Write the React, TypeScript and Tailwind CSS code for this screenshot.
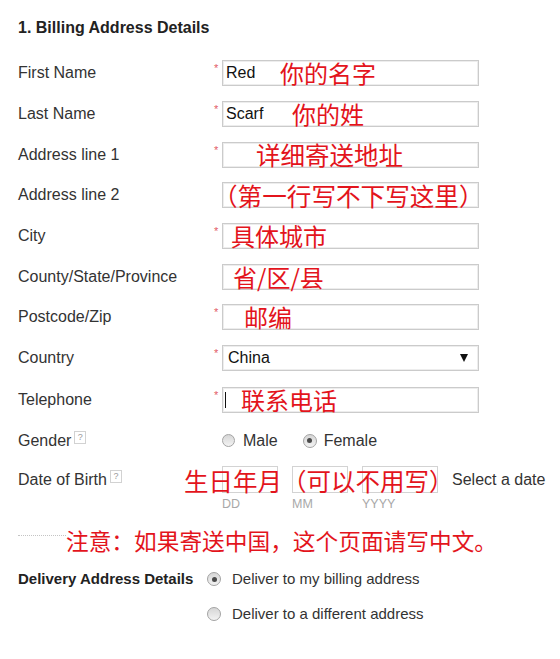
import React from "react";

const RED = "text-[#e3141c]";

type RowDef = {
  label: string;
  h: string;
  req?: boolean;
  value?: string;
  note?: string;
  noteCls?: string;
};

const rows: RowDef[] = [
  { label: "First Name", h: "h-[41px]", req: true, value: "Red", note: "你的名字", noteCls: "left-[58px] text-[24px]" },
  { label: "Last Name", h: "h-[41px]", req: true, value: "Scarf", note: "你的姓", noteCls: "left-[70px] text-[24px]" },
  { label: "Address line 1", h: "h-[41px]", req: true, note: "详细寄送地址", noteCls: "left-[34px] text-[24.5px]" },
  { label: "Address line 2", h: "h-[40px]", note: "（第一行写不下写这里）", noteCls: "left-[-9px] text-[24.6px]" },
  { label: "City", h: "h-[41px]", req: true, note: "具体城市", noteCls: "left-[9px] text-[24px]" },
  { label: "County/State/Province", h: "h-[41px]", note: "省/区/县", noteCls: "left-[11px] text-[24px]" },
  { label: "Postcode/Zip", h: "h-[40px]", req: true, note: "邮编", noteCls: "left-[22px] text-[24px]" },
];

function Star() {
  return (
    <span className="absolute left-[-8px] top-[3px] text-[11px] leading-[11px] text-[#e25a66]">*</span>
  );
}

function Help() {
  return (
    <span className="relative top-[-3px] ml-[3px] inline-flex h-[13px] w-[12px] items-center justify-center border border-[#d2d2d2] bg-white text-[9px] leading-none text-[#9a9a9a]">
      ?
    </span>
  );
}

function Radio({ checked, size }: { checked?: boolean; size: string }) {
  return (
    <span
      className={`inline-flex ${size} items-center justify-center rounded-full border border-[#a3a3a3] bg-gradient-to-b from-[#d6d6d6] to-[#f3f3f3]`}
    >
      {checked && <span className="h-[5px] w-[5px] rounded-full bg-[#4a4a4a]" />}
    </span>
  );
}

const CJK = "[font-family:'Noto_Sans_CJK_SC','Noto_Sans',sans-serif]";

export default function App() {
  return (
    <div className="min-h-[659px] w-[560px] bg-white pl-[18px] text-[#333] [font-family:'Liberation_Sans',Arial,sans-serif]">
      <div className="h-[52px] pt-[18px] text-[16px] font-bold leading-[20px] text-[#222]">
        1. Billing Address Details
      </div>

      {rows.map((r) => (
        <div key={r.label} className={`flex items-center ${r.h}`}>
          <div className="w-[204px] text-[16px] leading-[20px]">{r.label}</div>
          <div className="relative">
            {r.req && <Star />}
            <div className="flex h-[26px] w-[257px] items-center border border-[#cbcbcb] bg-white pl-[3px] text-[16px] text-[#111] shadow-[inset_0_0_0_1px_#ededed]">
              {r.value}
            </div>
            {r.note && (
              <div
                className={`absolute top-0 bottom-0 flex items-center whitespace-nowrap ${r.noteCls} ${CJK} leading-[24px] ${RED}`}
              >
                {r.note}
              </div>
            )}
          </div>
        </div>
      ))}

      {/* Country */}
      <div className="flex h-[42px] items-center">
        <div className="w-[204px] text-[16px] leading-[20px]">Country</div>
        <div className="relative">
          <Star />
          <div className="flex h-[26px] w-[257px] items-center justify-between border border-[#cbcbcb] bg-white pl-[5px] pr-[10px] text-[16px] text-[#111] shadow-[inset_0_0_0_1px_#ededed]">
            <span>China</span>
            <svg width="8" height="8" viewBox="0 0 8 8">
              <polygon points="0,0 8,0 4,8" fill="#111" />
            </svg>
          </div>
        </div>
      </div>

      {/* Telephone */}
      <div className="flex h-[41px] items-center">
        <div className="w-[204px] text-[16px] leading-[20px]">Telephone</div>
        <div className="relative">
          <Star />
          <div className="flex h-[26px] w-[257px] items-center border border-[#cbcbcb] bg-white pl-[2px] shadow-[inset_0_0_0_1px_#ededed]">
            <span className="h-[16px] w-[1px] bg-[#111]" />
          </div>
          <div className={`absolute top-0 bottom-0 left-[19px] flex items-center whitespace-nowrap ${CJK} text-[24px] leading-[24px] ${RED}`}>
            联系电话
          </div>
        </div>
      </div>

      {/* Gender */}
      <div className="flex h-[41px] items-center">
        <div className="flex w-[204px] items-center text-[16px] leading-[20px]">
          Gender
          <Help />
        </div>
        <div className="flex items-center text-[16px] leading-[20px]">
          <Radio size="h-[13px] w-[13px]" />
          <span className="ml-[8px]">Male</span>
          <span className="ml-[25px] flex">
            <Radio checked size="h-[14px] w-[14px]" />
          </span>
          <span className="ml-[7px]">Female</span>
        </div>
      </div>

      {/* Date of Birth */}
      <div className="mt-[5px] flex h-[27px] items-center">
        <div className="flex w-[204px] items-center text-[16px] leading-[20px]">
          Date of Birth
          <Help />
        </div>
        <div className="relative flex items-center">
          <div className="h-[27px] w-[56px] border border-[#d3d3d3] bg-white" />
          <div className="ml-[14px] h-[27px] w-[56px] border border-[#d3d3d3] bg-white" />
          <div className="ml-[14px] h-[27px] w-[76px] border border-[#d3d3d3] bg-white" />
          <span className="ml-[14px] whitespace-nowrap text-[16px] leading-[20px]">Select a date</span>
          <div className={`absolute left-[-38px] top-[3px] whitespace-nowrap ${CJK} text-[24.5px] leading-[24px] ${RED}`}>
            生日年月（可以不用写）
          </div>
        </div>
      </div>
      <div className="mt-[4px] flex h-[14px] items-center pl-[204px] text-[12.5px] leading-[14px] text-[#a8a8a8]">
        <span className="w-[70px]">DD</span>
        <span className="w-[70px]">MM</span>
        <span>YYYY</span>
      </div>

      {/* separator + note */}
      <div className="relative mt-[24px] w-[466px] border-t border-dotted border-[#c4c4c4]">
        <div className={`absolute left-[48px] top-[-7px] whitespace-nowrap bg-white ${CJK} text-[22.7px] leading-[24px] ${RED}`}>
          注意：如果寄送中国，这个页面请写中文。
        </div>
      </div>

      {/* Delivery */}
      <div className="mt-[33px] flex h-[20px] items-center">
        <div className="w-[189px] text-[15px] font-bold leading-[20px] text-[#222]">Delivery Address Details</div>
        <Radio checked size="h-[14px] w-[14px]" />
        <span className="ml-[11px] text-[15px] leading-[20px]">Deliver to my billing address</span>
      </div>
      <div className="mt-[15px] flex h-[20px] items-center pl-[189px]">
        <Radio size="h-[14px] w-[14px]" />
        <span className="ml-[11px] text-[15px] leading-[20px]">Deliver to a different address</span>
      </div>
    </div>
  );
}
